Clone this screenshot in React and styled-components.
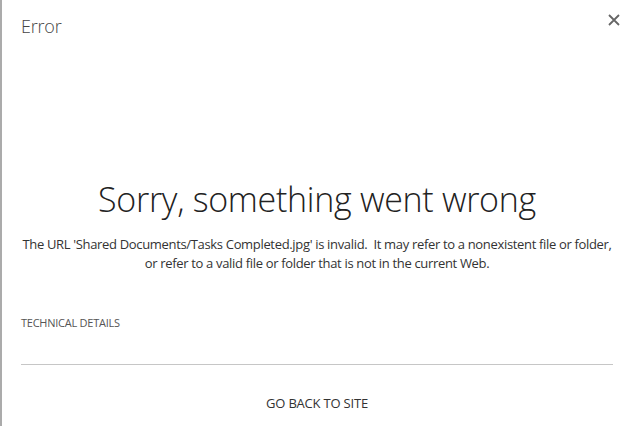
import React from "react";
import styled, { createGlobalStyle } from "styled-components";

const GlobalStyle = createGlobalStyle`
  html, body {
    margin: 0;
    padding: 0;
    background: #fff;
  }
  body {
    font-family: "Open Sans", "Liberation Sans", sans-serif;
    color: #333;
  }
`;

const Dialog = styled.div`
  box-sizing: border-box;
  width: 634px;
  height: 426px;
  border-left: 2px solid #ababab;
  background: #fff;
  display: flex;
  flex-direction: column;
  padding: 0 21px 0 19px;
`;

const TitleBar = styled.div`
  display: flex;
  justify-content: space-between;
  align-items: flex-start;
  height: 150px;
`;

const Title = styled.h1`
  margin: 14px 0 0 0;
  font-size: 18px;
  font-weight: 300;
  color: #444;
  letter-spacing: -0.2px;
`;

const CloseButton = styled.button`
  border: 0;
  background: none;
  padding: 0;
  margin: 14px -7px 0 0;
  width: 12px;
  height: 12px;
  cursor: pointer;
  display: flex;
`;

const Heading = styled.h2`
  margin: 26px 0 0 0;
  text-align: center;
  font-size: 34px;
  font-weight: 300;
  color: #222;
  letter-spacing: -0.3px;
`;

const Message = styled.p`
  margin: 13px -4px 0 -4px;
  text-align: center;
  font-size: 13px;
  line-height: 19px;
  color: #333;
  letter-spacing: -0.33px;
`;

const Details = styled.div`
  margin-top: 42px;
  font-size: 11px;
  color: #555;
  letter-spacing: -0.25px;
  padding-bottom: 34px;
  border-bottom: 1px solid #c6c6c6;
`;

const BackLink = styled.a`
  margin-top: 29px;
  align-self: center;
  font-size: 13px;
  color: #333;
  text-decoration: none;
  letter-spacing: -0.2px;
`;

function CloseIcon() {
  return (
    <svg width="12" height="12" viewBox="0 0 12 12">
      <path d="M1 1 L11 11 M11 1 L1 11" stroke="#666" strokeWidth="1.8" />
    </svg>
  );
}

export default function App() {
  return (
    <>
      <GlobalStyle />
      <Dialog>
        <TitleBar>
          <Title>Error</Title>
          <CloseButton aria-label="Close">
            <CloseIcon />
          </CloseButton>
        </TitleBar>
        <Heading>Sorry, something went wrong</Heading>
        <Message>
          The URL 'Shared Documents/Tasks Completed.jpg' is invalid.&nbsp; It may refer to a nonexistent file or folder,
          <br />
          or refer to a valid file or folder that is not in the current Web.
        </Message>
        <Details>TECHNICAL DETAILS</Details>
        <BackLink href="#">GO BACK TO SITE</BackLink>
      </Dialog>
    </>
  );
}
